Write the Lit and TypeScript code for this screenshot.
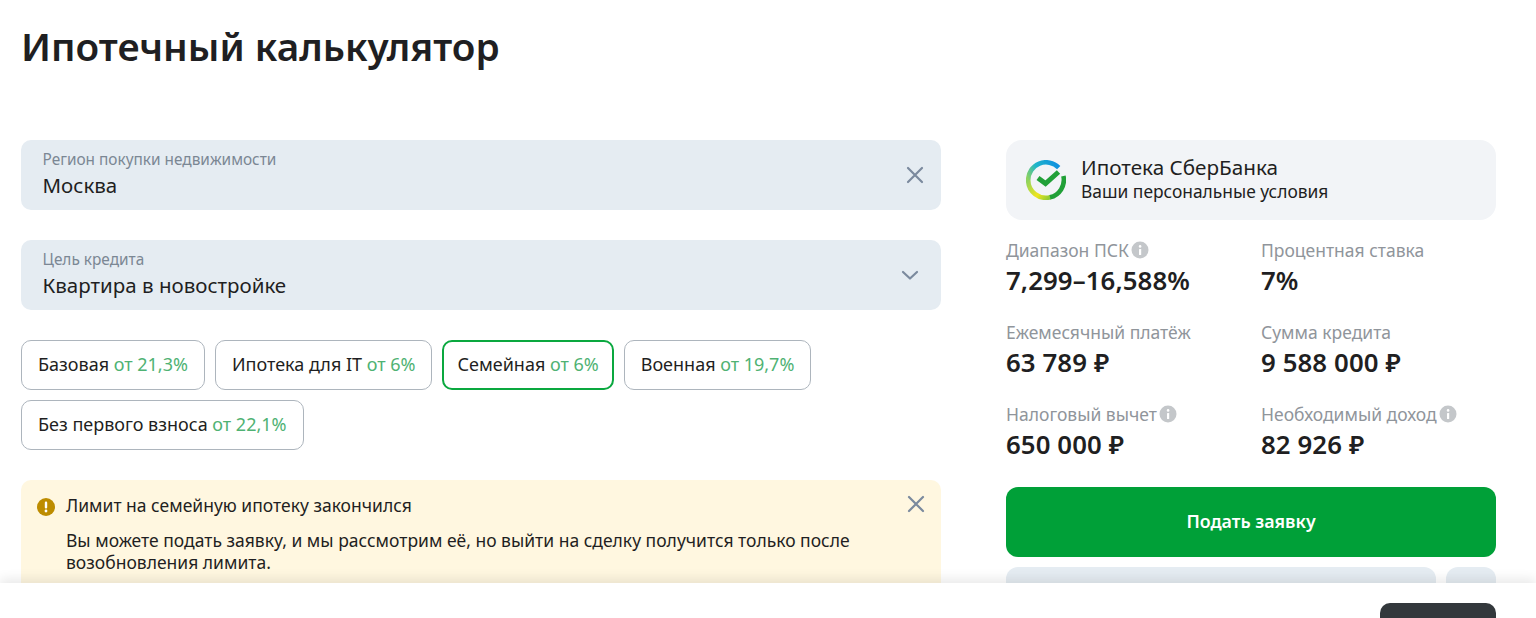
import { LitElement, html, css } from "lit";
import { customElement } from "lit/decorators.js";

const closeIcon = (cls: string) => html`<svg class=${cls} width="18" height="18" viewBox="0 0 18 18" fill="none"><path d="M2 2 16 16M16 2 2 16" stroke="currentColor" stroke-width="2.2" stroke-linecap="round"/></svg>`;
const info = html`<svg class="info" width="18" height="18" viewBox="0 0 18 18"><circle cx="9" cy="9" r="8.5" fill="#c4c7ca"/><rect x="8" y="8" width="2.2" height="6" rx=".6" fill="#fff"/><circle cx="9.1" cy="5.4" r="1.3" fill="#fff"/></svg>`;

const tabs = [
  ["Базовая", "от 21,3%", false],
  ["Ипотека для IT", "от 6%", false],
  ["Семейная", "от 6%", true],
  ["Военная", "от 19,7%", false],
  ["Без первого взноса", "от 22,1%", false],
] as const;

const stats: [string, string, boolean][] = [
  ["Диапазон ПСК", "7,299–16,588%", true],
  ["Процентная ставка", "7%", false],
  ["Ежемесячный платёж", "63 789 ₽", false],
  ["Сумма кредита", "9 588 000 ₽", false],
  ["Налоговый вычет", "650 000 ₽", true],
  ["Необходимый доход", "82 926 ₽", true],
];

@customElement("app-root")
export class AppRoot extends LitElement {
  static styles = css`
    :host { display: block; height: 618px; overflow: hidden; position: relative; background: #fff; color: #1f1f22; font-family: "Noto Sans", "Open Sans", sans-serif; }
    h1 { margin: 0; padding: 22px 0 0 21px; height: 140px; box-sizing: border-box; font-size: 38.7px; line-height: 48px; font-weight: 600; }
    .main { display: flex; gap: 65px; padding-left: 21px; }
    .left { width: 920px; display: flex; flex-direction: column; gap: 30px; }
    .right { width: 490px; }
    .field { height: 70px; box-sizing: border-box; background: #e5ecf2; border-radius: 10px; padding: 11px 22px 11px 21.5px; display: flex; align-items: center; justify-content: space-between; color: #7b8a9e; }
    .field-label { font-size: 15.4px; line-height: 18px; color: #7b8794; }
    .field-value { font-size: 20.5px; line-height: 28px; color: #1f1f22; margin-top: 2px; }
    .field svg { flex: none; }
    .field .close { margin-right: -5px; }
    .tabs { display: flex; flex-wrap: wrap; gap: 10px; }
    .tab { height: 50px; box-sizing: border-box; border: 1px solid #adb5bd; border-radius: 10px; padding: 0 16px 3px; display: flex; align-items: center; gap: 4.6px; font-size: 18px; background: #fff; white-space: nowrap; }
    .tab.active { border: 2px solid #0aa83f; padding: 0 13px 3px; }
    .tab span { color: #4fb273; }
    .alert { background: #fff7e0; border-radius: 10px; padding: 14px 16px; height: 160px; box-sizing: border-box; display: grid; grid-template-columns: 18px 1fr 18px; column-gap: 11px; }
    .alert-title { font-size: 17.5px; line-height: 23px; }
    .alert-text { font-size: 17.5px; line-height: 22px; margin-top: 12px; max-width: 830px; }
    .alert-x { color: #7b8a9e; margin-top: 1px; }
    .warn { margin-top: 4px; }
    .offer { height: 80px; box-sizing: border-box; background: #f2f4f7; border-radius: 16px; display: flex; align-items: center; gap: 15px; padding: 0 20px; }
    .offer-text { padding-bottom: 4px; }
    .offer-title { font-size: 20.7px; line-height: 26px; }
    .offer-sub { font-size: 17.4px; line-height: 22px; }
    .stats { display: grid; grid-template-columns: 255px 235px; row-gap: 25px; margin-top: 19px; }
    .stat-label { font-size: 17.5px; line-height: 22px; color: #90959b; display: flex; align-items: center; gap: 2px; }
    .stat-value { font-size: 25.8px; line-height: 32px; font-weight: 600; margin-top: 3px; white-space: nowrap; letter-spacing: 0.1px; }
    .submit { margin-top: 27px; height: 70px; background: #00a038; color: #fff; border-radius: 12px; display: flex; align-items: center; justify-content: center; font-weight: 600; font-size: 17.8px; padding-bottom: 2px; box-sizing: border-box; }
    .secondary { display: flex; gap: 10px; margin-top: 10px; }
    .secondary div { height: 60px; background: #e5ecf2; border-radius: 12px; }
    .secondary div:first-child { flex: 1; }
    .secondary div:last-child { width: 50px; }
    .footer { position: absolute; left: 0; right: 0; top: 583px; height: 35px; background: #fff; box-shadow: 0 -4px 12px rgba(0,0,0,.09); display: flex; justify-content: flex-end; padding: 20px 40px 0 0; box-sizing: border-box; }
    .footer div { width: 116px; height: 40px; background: #33383c; border-radius: 10px 10px 0 0; }
  `;

  render() {
    return html`
      <h1>Ипотечный калькулятор</h1>
      <div class="main">
        <div class="left">
          <div class="field">
            <div><div class="field-label">Регион покупки недвижимости</div><div class="field-value">Москва</div></div>
            ${closeIcon("close")}
          </div>
          <div class="field">
            <div><div class="field-label">Цель кредита</div><div class="field-value">Квартира в новостройке</div></div>
            <svg width="18" height="18" viewBox="0 0 18 18" fill="none"><path d="M2 6 9 12.5 16 6" stroke="currentColor" stroke-width="2.2" stroke-linecap="round" stroke-linejoin="round"/></svg>
          </div>
          <div class="tabs">
            ${tabs.map(([n, r, a]) => html`<div class="tab ${a ? "active" : ""}">${n} <span>${r}</span></div>`)}
          </div>
          <div class="alert">
            <svg class="warn" width="18" height="18" viewBox="0 0 18 18"><circle cx="9" cy="9" r="9" fill="#bd8c00"/><rect x="7.8" y="3.6" width="2.4" height="7" rx="1.1" fill="#fff"/><circle cx="9" cy="13" r="1.4" fill="#fff"/></svg>
            <div>
              <div class="alert-title">Лимит на семейную ипотеку закончился</div>
              <div class="alert-text">Вы можете подать заявку, и мы рассмотрим её, но выйти на сделку получится только после возобновления лимита.</div>
            </div>
            ${closeIcon("alert-x")}
          </div>
        </div>
        <div class="right">
          <div class="offer">
            <svg width="40" height="40" viewBox="0 0 40 40" fill="none">
              <defs>
                <linearGradient id="a" x1="33" y1="6" x2="3" y2="22" gradientUnits="userSpaceOnUse"><stop stop-color="#0f8fe0"/><stop offset=".6" stop-color="#1fb6c9"/><stop offset="1" stop-color="#8fd35e"/></linearGradient>
                <linearGradient id="b" x1="2" y1="20" x2="26" y2="38" gradientUnits="userSpaceOnUse"><stop stop-color="#8fd35e"/><stop offset=".55" stop-color="#f0e51c"/><stop offset="1" stop-color="#7cc83a"/></linearGradient>
              </defs>
              <path d="M32.7 7.6A17.8 17.8 0 0 0 2.2 20" stroke="url(#a)" stroke-width="4.6"/>
              <path d="M2.2 20A17.8 17.8 0 0 0 24.5 37.2" stroke="url(#b)" stroke-width="4.6"/>
              <path d="M24 37.3A17.8 17.8 0 0 0 37.4 16" stroke="#21a038" stroke-width="4.6"/>
              <path d="M12 18 19.5 23.5 32.5 12" stroke="#21a038" stroke-width="5"/>
            </svg>
            <div class="offer-text">
              <div class="offer-title">Ипотека СберБанка</div>
              <div class="offer-sub">Ваши персональные условия</div>
            </div>
          </div>
          <div class="stats">
            ${stats.map(([l, v, i]) => html`<div><div class="stat-label">${l}${i ? info : ""}</div><div class="stat-value">${v}</div></div>`)}
          </div>
          <div class="submit">Подать заявку</div>
          <div class="secondary"><div></div><div></div></div>
        </div>
      </div>
      <div class="footer"><div></div></div>
    `;
  }
}
